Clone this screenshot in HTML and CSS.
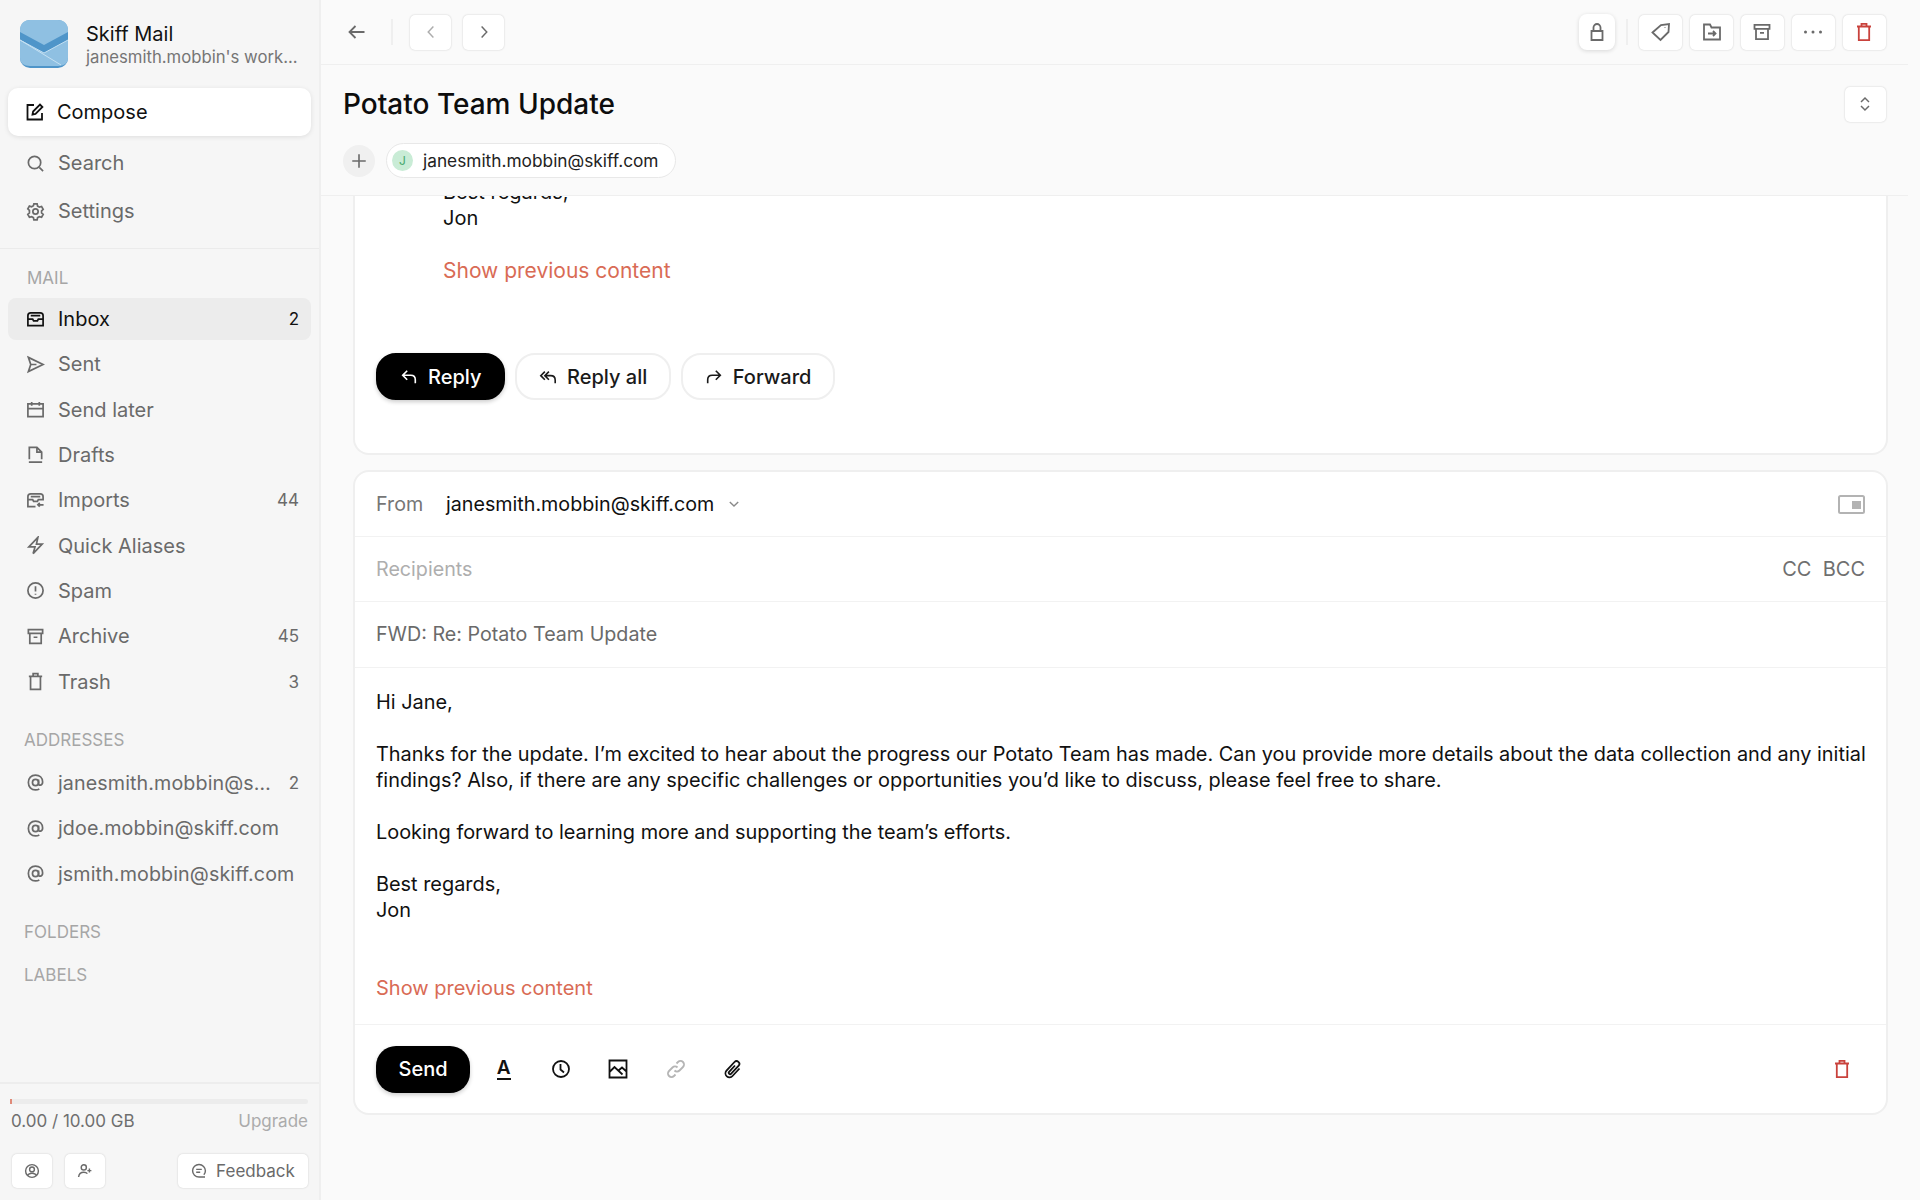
FILE: index.html
```html
<!DOCTYPE html>
<html lang="en">
<head>
    <meta charset="UTF-8">
    <meta name="viewport" content="width=device-width, initial-scale=1.0">
    <title>Skiff Mail</title>
    <link rel="stylesheet" href="styles.css">
</head>
<body>
    <svg class="sprite" width="0" height="0">
        <symbol id="i-trash" viewBox="0 0 20 20"><path d="M3 4.500h14M7.500 4.500V1.800h5v2.700M4.800 4.500v13.700h10.400V4.500"/></symbol>
        <symbol id="i-archive" viewBox="0 0 20 20"><path d="M2.500 2.800h15v4h-15zM4 6.800v10.400h12V6.800M8 10.800h4"/></symbol>
        <symbol id="i-at" viewBox="0 0 20 20"><circle cx="10" cy="10" r="3.2"/><path d="M13.200 6.800v4.400c0 2.600 4.300 2.200 4.300-1.600C17.500 5 14.200 2.200 10 2.200 5.500 2.200 2.500 5.500 2.500 10s3 7.800 7.500 7.800c1.500 0 2.800-.3 4-1"/></symbol>
    </svg>

    <div class="app">
        <aside class="sidebar">
            <div class="brand">
                <svg class="logo" width="48" height="48" viewBox="0 0 48 48">
                    <rect width="48" height="48" rx="10" fill="#4f95c9"/>
                    <path d="M0 10C0 4 4 0 10 0h28c6 0 10 4 10 10v28c0 5-4 8-10 8H10C4 46 0 43 0 38z" fill="#8fc0e2"/>
                    <path d="M0 12l24 13 24-13v8L24 33 0 20z" fill="#4f95c9"/>
                    <path d="M0 20l41 25" stroke="#c5e0f2" stroke-width="1" fill="none"/>
                    <path d="M0 20l24 13 24-13" stroke="#c5e0f2" stroke-width="1" fill="none"/>
                </svg>
                <div class="brand-text">
                    <div class="brand-name">Skiff Mail</div>
                    <div class="brand-sub">janesmith.mobbin's work...</div>
                </div>
            </div>

            <div class="compose">
                <svg class="icon" viewBox="0 0 20 20"><path d="M9 3H2.500v14.500H17V11M7.500 12.500l.6-3L15 2.600l2.400 2.400-6.900 6.900z"/></svg>
                Compose
            </div>
            <div class="nav-item top-item">
                <svg class="icon" viewBox="0 0 20 20"><circle cx="9" cy="9" r="6.500"/><path d="M14 14l4 4"/></svg>
                <span class="nav-label">Search</span>
            </div>
            <div class="nav-item top-item">
                <svg class="icon" viewBox="0 0 20 20"><circle cx="10" cy="10" r="2.800"/><path d="M8.300 2h3.400l.5 2.300 1.900 1.100 2.300-.7 1.700 3-1.700 1.600v2.200l1.700 1.600-1.700 3-2.300-.7-1.900 1.100-.5 2.300H8.300l-.5-2.300-1.900-1.100-2.300.7-1.700-3 1.700-1.600V8.900L1.900 7.300l1.700-3 2.300.7 1.900-1.100z"/></svg>
                <span class="nav-label">Settings</span>
            </div>

            <div class="nav-divider"></div>

            <div class="section-title section-mail">MAIL</div>
            <div class="nav-list">
                <div class="nav-item active">
                    <svg class="icon" viewBox="0 0 20 20"><path d="M2 9.500V6c0-2 1-3 3-3h10c2 0 3 1 3 3v10.500H2V9.500h5l1 2h4l1-2h5M5 6h10"/></svg>
                    <span class="nav-label">Inbox</span><span class="count">2</span>
                </div>
                <div class="nav-item">
                    <svg class="icon" viewBox="0 0 20 20"><path d="M2.500 2.500L18 10 2.500 17.500 5 10zM5 10h6"/></svg>
                    <span class="nav-label">Sent</span>
                </div>
                <div class="nav-item">
                    <svg class="icon" viewBox="0 0 20 20"><path d="M2 4h16v13.500H2zM2 9h16M6 2v4M14 2v4"/></svg>
                    <span class="nav-label">Send later</span>
                </div>
                <div class="nav-item">
                    <svg class="icon" viewBox="0 0 20 20"><path d="M3.500 15V2.500h8l5 5V15M11.500 2.500v5h5M3 18h14"/></svg>
                    <span class="nav-label">Drafts</span>
                </div>
                <div class="nav-item">
                    <svg class="icon" viewBox="0 0 20 20"><path d="M10 16.500H2V9h5l1 2h4l1-2h5M2 9V6c0-2 1-3 3-3h10c2 0 3 1 3 3v4M5 6h10M18.500 14.500h-6M14.500 12.500l-2 2 2 2"/></svg>
                    <span class="nav-label">Imports</span><span class="count">44</span>
                </div>
                <div class="nav-item">
                    <svg class="icon" viewBox="0 0 20 20"><path d="M12.500 1.500L3 11.500h6.500l-2 7 9.500-10h-6z"/></svg>
                    <span class="nav-label">Quick Aliases</span>
                </div>
                <div class="nav-item">
                    <svg class="icon" viewBox="0 0 20 20"><circle cx="10" cy="10" r="8"/><path d="M10 5.500v5.500M10 13.500v1"/></svg>
                    <span class="nav-label">Spam</span>
                </div>
                <div class="nav-item">
                    <svg class="icon"><use href="#i-archive"/></svg>
                    <span class="nav-label">Archive</span><span class="count">45</span>
                </div>
                <div class="nav-item">
                    <svg class="icon"><use href="#i-trash"/></svg>
                    <span class="nav-label">Trash</span><span class="count">3</span>
                </div>
            </div>

            <div class="section-title section-addresses">ADDRESSES</div>
            <div class="nav-list">
                <div class="nav-item">
                    <svg class="icon at"><use href="#i-at"/></svg>
                    <span class="nav-label addr">janesmith.mobbin@s…</span><span class="count">2</span>
                </div>
                <div class="nav-item">
                    <svg class="icon at"><use href="#i-at"/></svg>
                    <span class="nav-label addr">jdoe.mobbin@skiff.com</span>
                </div>
                <div class="nav-item">
                    <svg class="icon at"><use href="#i-at"/></svg>
                    <span class="nav-label addr">jsmith.mobbin@skiff.com</span>
                </div>
            </div>

            <div class="section-title section-folders">FOLDERS</div>
            <div class="section-title section-labels">LABELS</div>

            <div class="sidebar-footer">
                <div class="storage-bar"><div class="storage-fill"></div></div>
                <div class="storage-row">
                    <span>0.00 / 10.00 GB</span>
                    <span class="upgrade">Upgrade</span>
                </div>
                <div class="footer-buttons">
                    <div class="foot-btn">
                        <svg class="icon-sm" viewBox="0 0 20 20"><circle cx="10" cy="10" r="8"/><circle cx="10" cy="8" r="3"/><path d="M4.500 15.500c1-2 3-2.800 5.500-2.800s4.500.8 5.500 2.800"/></svg>
                    </div>
                    <div class="foot-btn">
                        <svg class="icon-sm" viewBox="0 0 20 20"><circle cx="8.500" cy="5.500" r="3.200"/><path d="M2 17.500c.5-4 3-6 6.500-6 2 0 3.500.6 4.500 1.800M15.500 7v5M13 9.500h5"/></svg>
                    </div>
                    <div class="foot-btn feedback">
                        <svg class="icon-sm" viewBox="0 0 20 20"><path d="M17.500 17.500H10a8 7.800 0 1 1 8-7.700c0 2.200-.8 3.800-2 5M6.500 8h7M6.500 11.500h5"/></svg>
                        Feedback
                    </div>
                </div>
            </div>
        </aside>

        <main class="main">
            <div class="toolbar">
                <svg class="icon back" viewBox="0 0 20 20"><path d="M17.500 10H2.500M8.500 4l-6 6 6 6"/></svg>
                <div class="tool-sep"></div>
                <div class="tool-btn nav-btn">
                    <svg class="icon-sm faded" viewBox="0 0 20 20"><path d="M13 3l-6.500 7 6.500 7"/></svg>
                </div>
                <div class="tool-btn nav-btn">
                    <svg class="icon-sm" viewBox="0 0 20 20"><path d="M7 3l6.500 7-6.500 7"/></svg>
                </div>
                <div class="tool-right">
                    <div class="tool-btn lock">
                        <svg class="icon" viewBox="0 0 20 20"><path d="M4.500 9h11v9h-11zM6.500 9V5.500a3.500 3.500 0 0 1 7 0V9"/></svg>
                    </div>
                    <div class="tool-sep right-sep"></div>
                    <div class="tool-btn wide">
                        <svg class="icon" viewBox="0 0 20 20"><path d="M1.500 10.500L10 3l8-1-.5 8-8 8zM14 5.500v.5"/></svg>
                    </div>
                    <div class="tool-btn wide">
                        <svg class="icon" viewBox="0 0 20 20"><path d="M2 2.500h6l1.500 3h8.500v12H2zM6 11.500h7.500M11 9l2.500 2.500-2.500 2.500"/></svg>
                    </div>
                    <div class="tool-btn wide">
                        <svg class="icon"><use href="#i-archive"/></svg>
                    </div>
                    <div class="tool-btn wide">
                        <svg class="icon dots" viewBox="0 0 20 20"><circle cx="2.500" cy="10" r="1.500"/><circle cx="10" cy="10" r="1.500"/><circle cx="17.500" cy="10" r="1.500"/></svg>
                    </div>
                    <div class="tool-btn wide danger">
                        <svg class="icon"><use href="#i-trash"/></svg>
                    </div>
                </div>
            </div>

            <div class="thread-head">
                <div class="title-row">
                    <h1>Potato Team Update</h1>
                    <div class="tool-btn expand">
                        <svg class="icon-sm" viewBox="0 0 20 20"><path d="M5 7.500L10 2.500l5 5M5 12.500l5 5 5-5"/></svg>
                    </div>
                </div>
                <div class="chip-row">
                    <div class="add-circle">
                        <svg class="icon-sm" viewBox="0 0 20 20"><path d="M10 2.500v15M2.500 10h15"/></svg>
                    </div>
                    <div class="chip"><span class="avatar">J</span>janesmith.mobbin@skiff.com</div>
                </div>
            </div>

            <div class="thread-scroll">
                <section class="mail-card">
                    <div class="quoted">
                        <p>Best regards,<br>Jon</p>
                        <div class="show-prev">Show previous content</div>
                    </div>
                    <div class="reply-row">
                        <div class="pill dark">
                            <svg class="icon-sm" viewBox="0 0 20 20"><path d="M8 3L3 8l5 5M3 8h9c3 0 5 2 5 5v4"/></svg>
                            Reply
                        </div>
                        <div class="pill">
                            <svg class="icon-sm" viewBox="0 0 20 20"><path d="M6.500 4L2 8.500 6.500 13M11 4L6.500 8.500 11 13M6.500 8.500H13c3 0 5 2 5 5V17"/></svg>
                            Reply all
                        </div>
                        <div class="pill">
                            <svg class="icon-sm" viewBox="0 0 20 20"><path d="M12 3l5 5-5 5M17 8H8c-3 0-5 2-5 5v4"/></svg>
                            Forward
                        </div>
                    </div>
                </section>

                <section class="compose-card">
                    <div class="field-row from-row">
                        <span class="field-label">From</span>
                        <span class="from-addr">janesmith.mobbin@skiff.com</span>
                        <svg class="chev" viewBox="0 0 20 20"><path d="M4 7l6 6 6-6"/></svg>
                        <svg class="pip" width="27" height="19" viewBox="0 0 27 19"><rect x="1" y="1" width="25" height="17" rx="1.500" fill="none" stroke="#b3b3b3" stroke-width="2"/><rect x="14" y="6" width="9" height="8" fill="#b3b3b3"/></svg>
                    </div>
                    <div class="field-row">
                        <span class="placeholder">Recipients</span>
                        <span class="cc">CC&nbsp;&nbsp;BCC</span>
                    </div>
                    <div class="field-row">
                        <span class="subject">FWD: Re: Potato Team Update</span>
                    </div>
                    <div class="compose-body">
                        <p>Hi Jane,</p>
                        <p>Thanks for the update. I’m excited to hear about the progress our Potato Team has made. Can you provide more details about the data collection and any initial findings? Also, if there are any specific challenges or opportunities you’d like to discuss, please feel free to share.</p>
                        <p>Looking forward to learning more and supporting the team’s efforts.</p>
                        <p>Best regards,<br>Jon</p>
                        <div class="show-prev">Show previous content</div>
                    </div>
                    <div class="send-bar">
                        <div class="send-btn">Send</div>
                        <div class="send-tool"><span class="font-a">A</span></div>
                        <div class="send-tool">
                            <svg class="icon" viewBox="0 0 20 20"><circle cx="10" cy="10" r="8"/><path d="M9.500 5v5.500l3.500 3"/></svg>
                        </div>
                        <div class="send-tool">
                            <svg class="icon" viewBox="0 0 20 20"><path d="M1.500 1.500h17v17h-17zM1.500 13l5-5 8 7.500M10.500 11.500l3.500-3 4.500 4"/></svg>
                        </div>
                        <div class="send-tool muted">
                            <svg class="icon" viewBox="0 0 20 20"><path d="M8.500 11.500a3.500 3.500 0 0 0 5 0l3.500-3.500a3.500 3.500 0 0 0-5-5l-1.500 1.500M11.500 8.500a3.500 3.500 0 0 0-5 0L3 12a3.500 3.500 0 0 0 5 5l1.500-1.500"/></svg>
                        </div>
                        <div class="send-tool">
                            <svg class="icon" viewBox="0 0 20 20"><path d="M16.500 9.500l-7 7.500a4 4 0 0 1-6-5.300l8-8.700a2.800 2.800 0 0 1 4.200 3.700l-7.500 8a1.400 1.400 0 0 1-2.100-1.900L12 6.500"/></svg>
                        </div>
                        <svg class="icon send-trash"><use href="#i-trash"/></svg>
                    </div>
                </section>
            </div>
        </main>
    </div>
</body>
</html>
```

FILE: styles.css
```css
* {
    box-sizing: border-box;
}

body {
    margin: 0;
    font-family: Inter, 'Noto Sans', sans-serif;
    background-color: #fafafa;
    color: #000;
}

p {
    margin: 0;
}

.sprite {
    display: block;
    position: absolute;
}

svg {
    flex-shrink: 0;
}

.icon,
.icon-sm {
    fill: none;
    stroke: currentColor;
    stroke-width: 1.8;
}

.icon {
    width: 20px;
    height: 20px;
}

.icon-sm {
    width: 16px;
    height: 16px;
}

.app {
    display: flex;
    height: 1200px;
    overflow: hidden;
}

/* sidebar */
.sidebar {
    width: 321px;
    flex-shrink: 0;
    display: flex;
    flex-direction: column;
    padding: 20px 0 0;
    background-color: #f6f6f6;
    border-right: 2px solid #efefef;
}

.brand {
    display: flex;
    align-items: center;
    gap: 18px;
    height: 48px;
    padding-left: 20px;
    margin-bottom: 20px;
}

.brand-name {
    font-size: 20px;
    line-height: 26px;
    color: #111;
}

.brand-sub {
    font-size: 16.7px;
    line-height: 21px;
    color: #757575;
    white-space: nowrap;
}

.compose {
    display: flex;
    align-items: center;
    gap: 12px;
    height: 48px;
    margin: 0 8px 6px;
    padding: 0 17px;
    background: #fff;
    border-radius: 10px;
    box-shadow: 0 1px 5px rgba(0, 0, 0, 0.1);
    font-size: 20px;
    color: #111;
}

.nav-item {
    display: flex;
    align-items: center;
    gap: 13px;
    height: 42px;
    margin: 0 8px 3.33px;
    padding: 0 12px 0 18px;
    border-radius: 8px;
    font-size: 20px;
    color: #6a6a6a;
    white-space: nowrap;
}

.nav-item.top-item {
    margin-bottom: 6px;
}

.nav-item.active {
    background-color: #ececec;
    color: #111;
}

.nav-item .icon {
    width: 19px;
    height: 19px;
}

.nav-label {
    flex: 1;
}

.nav-label.addr {
    font-size: 19.7px;
    letter-spacing: 0.1px;
}

.count {
    font-size: 17px;
}

.nav-divider {
    height: 1px;
    margin-top: 10px;
    background-color: #ebebeb;
}

.section-title {
    font-size: 17px;
    line-height: 20px;
    color: #a6a6a6;
}

.section-mail {
    padding-left: 27px;
    margin: 19px 0 10px;
}

.section-addresses {
    padding-left: 24px;
    margin: 24px 0 12px;
}

.section-folders {
    padding-left: 24px;
    margin-top: 24px;
}

.section-labels {
    padding-left: 24px;
    margin-top: 23px;
}

.sidebar-footer {
    margin-top: auto;
    height: 118px;
    padding: 15px 11px 0 10px;
    border-top: 2px solid #ededed;
}

.storage-bar {
    height: 5px;
    background-color: #ececec;
    border-radius: 3px;
}

.storage-fill {
    width: 2px;
    height: 100%;
    background-color: #e08a78;
}

.storage-row {
    display: flex;
    justify-content: space-between;
    margin-top: 7px;
    padding-left: 1px;
    font-size: 17px;
    line-height: 20px;
    color: #6f6f6f;
}

.upgrade {
    color: #ababab;
}

.footer-buttons {
    display: flex;
    gap: 13px;
    margin-top: 23px;
    padding-left: 2px;
}

.foot-btn {
    display: flex;
    align-items: center;
    justify-content: center;
    width: 40px;
    height: 34px;
    background: #fff;
    border-radius: 5px;
    box-shadow: 0 0 2px rgba(0, 0, 0, 0.18);
    color: #6a6a6a;
}

.foot-btn.feedback {
    width: 130px;
    gap: 9px;
    margin-left: auto;
    font-size: 17px;
}

/* main column */
.main {
    flex: 1;
    min-width: 0;
    display: flex;
    flex-direction: column;
}

.toolbar {
    display: flex;
    align-items: center;
    flex-shrink: 0;
    height: 65px;
    padding: 0 22px 0 26px;
    margin-right: 12px;
    border-bottom: 1px solid #efefef;
    color: #6a6a6a;
}

.tool-sep {
    width: 2px;
    height: 26px;
    margin: 0 17px 0 24px;
    background-color: #efefef;
}

.tool-btn {
    display: flex;
    align-items: center;
    justify-content: center;
    height: 35px;
    background: #fff;
    border-radius: 5px;
    box-shadow: 0 0 2px rgba(0, 0, 0, 0.2);
}

.nav-btn {
    width: 41px;
    margin-right: 12px;
}

.faded {
    opacity: 0.55;
}

.tool-right {
    display: flex;
    align-items: center;
    gap: 7.4px;
    margin-left: auto;
}

.tool-btn.lock {
    width: 36px;
    height: 36px;
    border-radius: 8px;
    box-shadow: 0 1px 4px rgba(0, 0, 0, 0.14);
}

.tool-sep.right-sep {
    margin: 0 4px 0 3px;
}

.tool-btn.wide {
    width: 43.5px;
}

.icon.dots {
    fill: currentColor;
    stroke: none;
}

.tool-btn.danger {
    color: #c9423c;
}

.thread-head {
    flex-shrink: 0;
    height: 131px;
    margin-right: 12px;
    padding: 0 22px;
    border-bottom: 1px solid #efefef;
}

.title-row {
    display: flex;
    align-items: center;
    justify-content: space-between;
    height: 78px;
}

h1 {
    margin: 0;
    font-size: 28px;
    font-weight: 500;
    color: #0d0d0d;
}

.tool-btn.expand {
    width: 41.5px;
    color: #6a6a6a;
}

.chip-row {
    display: flex;
    align-items: center;
    gap: 11px;
}

.add-circle {
    display: flex;
    align-items: center;
    justify-content: center;
    width: 32px;
    height: 32px;
    border-radius: 50%;
    background-color: #f0f0f0;
    color: #6a6a6a;
}

.add-circle .icon-sm {
    width: 18px;
    height: 18px;
}

.chip {
    display: flex;
    align-items: center;
    gap: 10px;
    height: 35px;
    padding: 0 16px 0 5px;
    background: #fff;
    border: 1px solid #e8e8e8;
    border-radius: 18px;
    font-size: 17.3px;
    color: #222;
}

.avatar {
    display: flex;
    align-items: center;
    justify-content: center;
    width: 21px;
    height: 21px;
    border-radius: 50%;
    background-color: #c9ecd6;
    color: #46a86c;
    font-size: 12px;
}

.thread-scroll {
    flex: 1;
    min-height: 0;
    overflow: hidden;
    padding: 0 32px;
}

.mail-card,
.compose-card {
    background: #fff;
    border: 2px solid #efefef;
}

.mail-card {
    height: 379px;
    margin-top: -120px;
    padding: 0 0 0 21px;
    border-radius: 0 0 16px 16px;
    border-top: none;
    overflow: hidden;
}

.quoted {
    height: 277px;
    padding: 103px 0 0 67px;
    font-size: 20px;
    line-height: 26px;
    color: #111;
}

.show-prev {
    margin-top: 27px;
    color: #d96b55;
    font-size: 20px;
    line-height: 26px;
}

.quoted .show-prev {
    font-size: 21px;
}

.reply-row {
    display: flex;
    gap: 9.5px;
}

.pill {
    display: flex;
    align-items: center;
    justify-content: center;
    gap: 10px;
    height: 47px;
    padding: 0 22px;
    background: #fff;
    border: 2px solid #efefef;
    border-radius: 20px;
    font-size: 20px;
    font-weight: 500;
    color: #1a1a1a;
}

.pill .icon-sm {
    width: 18px;
    height: 18px;
}

.pill.dark {
    background-color: #000;
    border-color: #000;
    color: #fff;
    box-shadow: 0 2px 4px rgba(0, 0, 0, 0.2);
}

.compose-card {
    height: 645px;
    margin-top: 15px;
    border-radius: 16px;
    display: flex;
    flex-direction: column;
}

.field-row {
    display: flex;
    align-items: center;
    height: 65.2px;
    flex-shrink: 0;
    padding: 0 21px;
    border-bottom: 1px solid #f2f2f2;
    font-size: 19.7px;
}

.field-label {
    width: 70px;
    color: #767676;
}

.from-addr {
    color: #111;
}

.chev {
    width: 14px;
    height: 14px;
    margin-left: 13px;
    fill: none;
    stroke: #8a8a8a;
    stroke-width: 2;
}

.pip {
    margin-left: auto;
}

.placeholder {
    color: #aeaeae;
}

.cc {
    margin-left: auto;
    color: #6f6f6f;
    font-size: 20px;
}

.subject {
    color: #6a6a6a;
}

.compose-body {
    flex: 1;
    padding: 21px 15px 0 21px;
    font-size: 19.9px;
    line-height: 26px;
    color: #111;
}

.compose-body p {
    margin-bottom: 26px;
}

.compose-body .show-prev {
    margin-top: 52px;
}

.send-bar {
    display: flex;
    align-items: center;
    flex-shrink: 0;
    height: 89px;
    padding: 0 21px;
    border-top: 1px solid #f2f2f2;
}

.send-btn {
    display: flex;
    align-items: center;
    justify-content: center;
    width: 94px;
    height: 47px;
    margin-right: 5px;
    background-color: #000;
    border-radius: 20px;
    box-shadow: 0 2px 4px rgba(0, 0, 0, 0.2);
    color: #fff;
    font-size: 20px;
    font-weight: 500;
}

.send-tool {
    display: flex;
    align-items: center;
    justify-content: center;
    width: 57.3px;
    color: #111;
}

.send-tool.muted {
    color: #b5b5b5;
}

.font-a {
    font-size: 19px;
    font-weight: 600;
    line-height: 20px;
    border-bottom: 2px solid #111;
}

.send-trash {
    margin-left: auto;
    margin-right: 13px;
    color: #c9423c;
}
```
